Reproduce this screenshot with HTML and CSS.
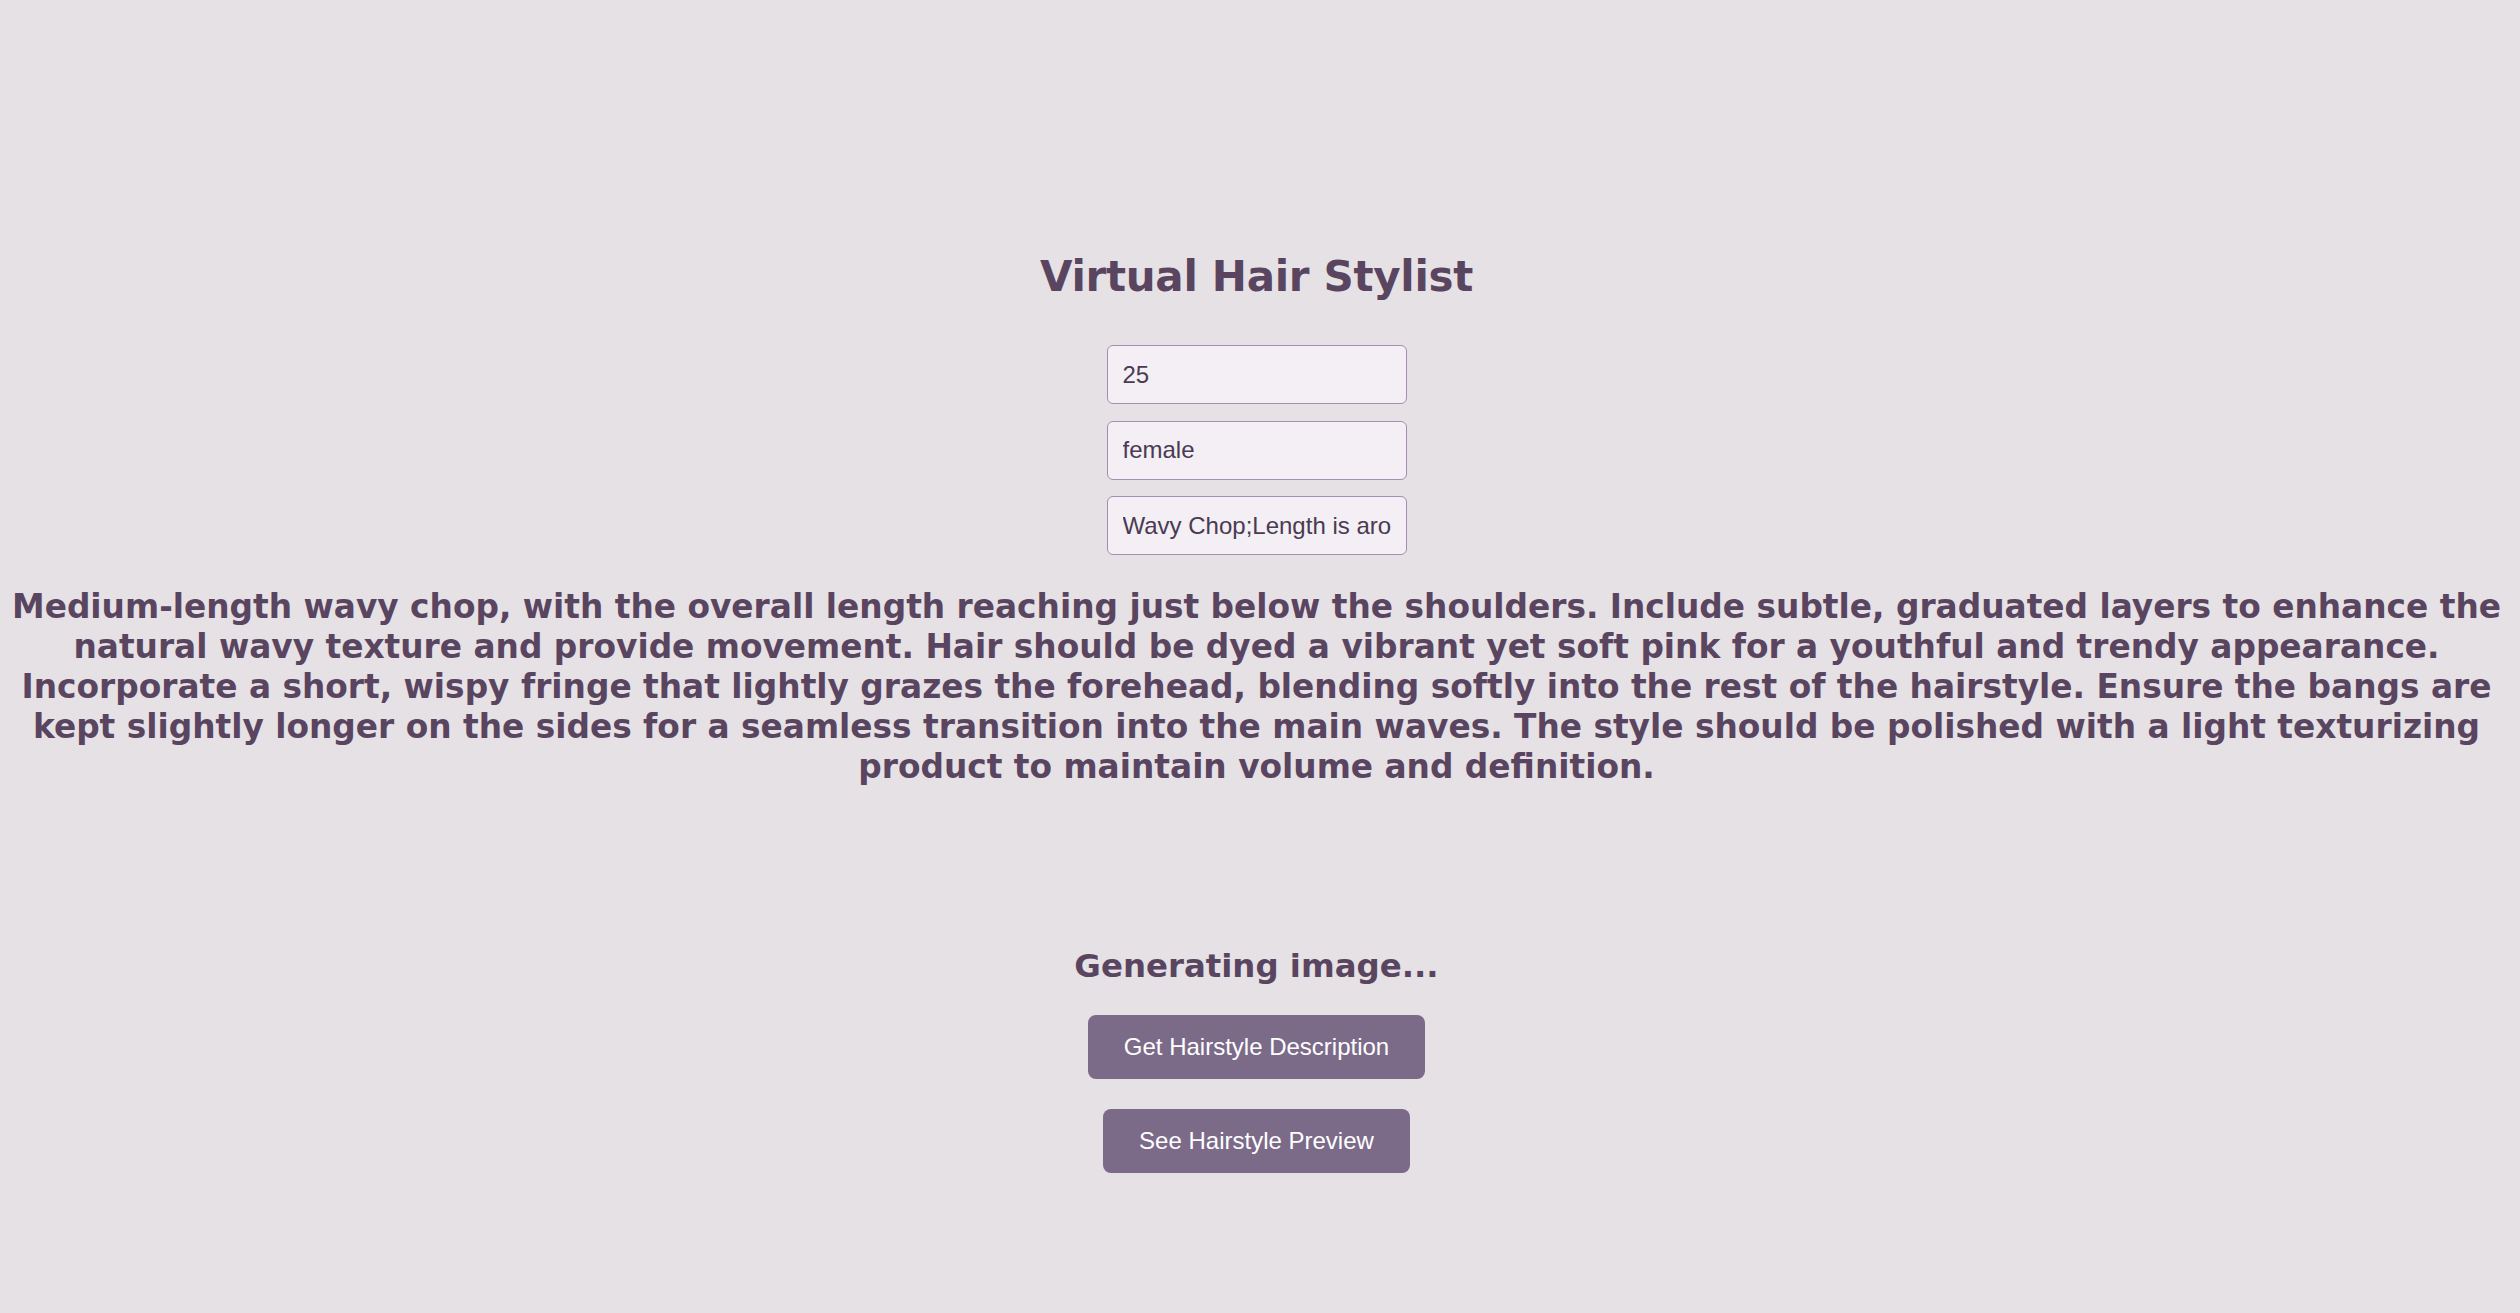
FILE: index.html
```html
<!DOCTYPE html>
<html lang="en">
<head>
<meta charset="utf-8">
<title>Virtual Hair Stylist</title>
<link rel="stylesheet" href="styles.css">
</head>
<body>
<main class="app">
  <h1 class="title">Virtual Hair Stylist</h1>
  <div class="fields">
    <input class="field" type="text" value="25">
    <input class="field" type="text" value="female">
    <input class="field" type="text" value="Wavy Chop;Length is around shoulder length;Color is pink;Bangs">
  </div>
  <p class="description">Medium-length wavy chop, with the overall length reaching just below the shoulders. Include subtle, graduated layers to enhance the natural wavy texture and provide movement. Hair should be dyed a vibrant yet soft pink for a youthful and trendy appearance. Incorporate a short, wispy fringe that lightly grazes the forehead, blending softly into the rest of the hairstyle. Ensure the bangs are kept slightly longer on the sides for a seamless transition into the main waves. The style should be polished with a light texturizing product to maintain volume and definition.</p>
  <h2 class="status">Generating image...</h2>
  <div class="actions">
    <button class="btn" type="button">Get Hairstyle Description</button>
    <button class="btn" type="button">See Hairstyle Preview</button>
  </div>
</main>
</body>
</html>
```
FILE: styles.css
```css
html, body {
  background: #e5e1e5;
}
body {
  margin: 8px 15px 8px 8px;
  font-family: "DejaVu Sans", Verdana, sans-serif;
  color: #5a4560;
}
.app {
  display: flex;
  flex-direction: column;
  align-items: center;
  padding-top: 243px;
}
.title {
  margin: 0 0 42px;
  font-size: 42px;
  line-height: 52px;
  letter-spacing: -0.3px;
  font-weight: bold;
}
.fields {
  display: flex;
  flex-direction: column;
  gap: 16.5px;
}
.field {
  box-sizing: border-box;
  width: 300px;
  height: 59px;
  padding: 15px;
  border: 1px solid #a38fb3;
  border-radius: 6px;
  background: #f3eff4;
  color: #4a3a52;
  font-family: "Liberation Sans", Arial, sans-serif;
  font-size: 24px;
  line-height: 27px;
  outline: none;
}
.description {
  margin: 32px 0 0;
  font-size: 32.8px;
  line-height: 40px;
  font-weight: bold;
  text-align: center;
}
.status {
  margin: 159px 0 29px;
  font-size: 32.4px;
  line-height: 40px;
  font-weight: bold;
}
.actions {
  display: flex;
  flex-direction: column;
  align-items: center;
  gap: 30px;
}
.btn {
  padding: 18px 36px;
  border: none;
  border-radius: 8px;
  background: #7c6a89;
  color: #ffffff;
  font-family: "Liberation Sans", Arial, sans-serif;
  font-size: 24px;
  line-height: 28px;
  cursor: pointer;
}
```
